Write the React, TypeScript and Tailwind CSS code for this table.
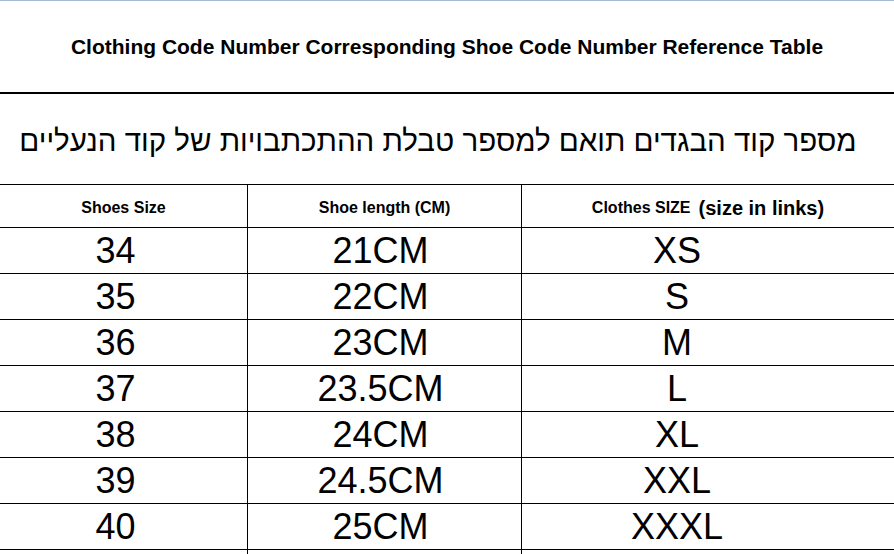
const rows = [
    { shoe: '34', length: '21CM', clothes: 'XS' },
    { shoe: '35', length: '22CM', clothes: 'S' },
    { shoe: '36', length: '23CM', clothes: 'M' },
    { shoe: '37', length: '23.5CM', clothes: 'L' },
    { shoe: '38', length: '24CM', clothes: 'XL' },
    { shoe: '39', length: '24.5CM', clothes: 'XXL' },
    { shoe: '40', length: '25CM', clothes: 'XXXL' },
    { shoe: '', length: '', clothes: '' },
];

const App = () => {
    return (
        <div className="w-[894px] h-[554px] overflow-hidden bg-white text-black font-['Liberation_Sans',Arial,'DejaVu_Sans',sans-serif]">
            <div className="h-[94px] border-t border-[#a3bbd3] border-b-2 border-b-black flex items-center justify-center">
                <h1 className="text-[21px] font-bold leading-none">
                    Clothing Code Number Corresponding Shoe Code Number Reference Table
                </h1>
            </div>

            <div className="h-[91px] pt-[3px] border-b border-black flex items-center justify-center">
                <p dir="rtl" className="text-[29.5px] leading-none whitespace-nowrap pr-[18px]">
                    מספר קוד הבגדים תואם למספר טבלת ההתכתבויות של קוד הנעליים
                </p>
            </div>

            <div className="grid grid-cols-[248px_274px_1fr]">
                <div className="h-[43px] pt-[3px] border-b border-r border-black flex items-center justify-center text-[16px] font-bold">
                    Shoes Size
                </div>
                <div className="h-[43px] pt-[3px] border-b border-r border-black flex items-center justify-center text-[16px] font-bold">
                    Shoe length (CM)
                </div>
                <div className="h-[43px] pt-[3px] border-b border-black flex items-center justify-center font-bold">
                    <span className="text-[16px]">Clothes SIZE</span>
                    <span className="text-[20px] ml-2">(size in links)</span>
                </div>

                {rows.map((row, i) => (
                    <div key={i} className="contents">
                        <div className="h-[46px] border-b border-r border-black flex items-center justify-center pr-[16px] text-[36px] leading-none">
                            {row.shoe}
                        </div>
                        <div className="h-[46px] border-b border-r border-black flex items-center justify-center pr-[8px] text-[36px] leading-none">
                            {row.length}
                        </div>
                        <div className="h-[46px] border-b border-black flex items-center justify-center pr-[62px] text-[36px] leading-none">
                            {row.clothes}
                        </div>
                    </div>
                ))}
            </div>
        </div>
    );
};

export default App;
